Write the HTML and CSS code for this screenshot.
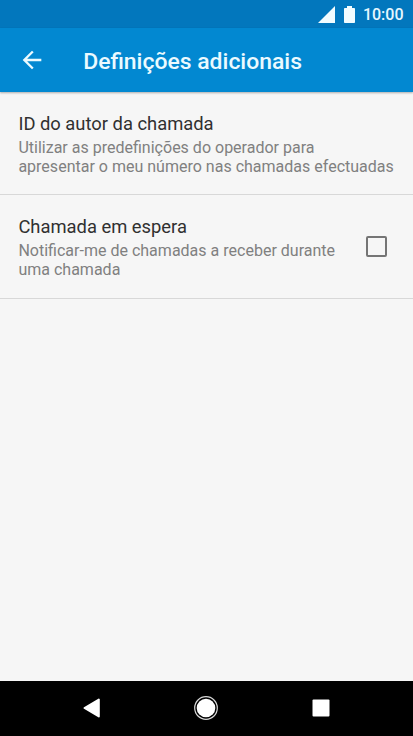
FILE: index.html
```html
<!DOCTYPE html>
<html lang="pt">
  <head>
    <meta charset="UTF-8" />
    <meta name="viewport" content="width=device-width, initial-scale=1.0" />
    <title>Definições adicionais</title>
    <link rel="stylesheet" href="styles.css">
  </head>
  <body>
    <div class="screen">
      <div class="status-bar">
        <svg class="signal-icon" width="17" height="17" viewBox="0 0 17 17">
          <path d="M0 17L17 0V17Z" />
        </svg>
        <svg class="battery-icon" width="11" height="17" viewBox="0 0 11 17">
          <path d="M3 0H8V2H10.2Q11 2 11 2.8V16.2Q11 17 10.2 17H0.8Q0 17 0 16.2V2.8Q0 2 0.8 2H3Z" />
        </svg>
        <span class="clock">10:00</span>
      </div>

      <header class="app-bar">
        <a href="#" class="back-button" aria-label="Voltar">
          <svg width="28" height="28" viewBox="0 0 24 24">
            <path d="M20 11H7.83l5.59-5.59L12 4l-8 8 8 8 1.41-1.41L7.83 13H20v-2z" />
          </svg>
        </a>
        <h1>Definições adicionais</h1>
      </header>

      <main class="settings">
        <div class="setting">
          <div class="setting-text">
            <div class="setting-title">ID do autor da chamada</div>
            <div class="setting-summary">
              Utilizar as predefinições do operador para<br />
              apresentar o meu número nas chamadas efectuadas
            </div>
          </div>
        </div>
        <div class="setting">
          <div class="setting-text">
            <div class="setting-title">Chamada em espera</div>
            <div class="setting-summary">
              Notificar-me de chamadas a receber durante<br />
              uma chamada
            </div>
          </div>
          <div class="checkbox" role="checkbox" aria-checked="false"></div>
        </div>
      </main>

      <nav class="nav-bar">
        <svg width="24" height="24" viewBox="0 0 24 24">
          <path d="M4.5 12L18.8 3.6V20.4Z" stroke-width="2" stroke-linejoin="round" />
        </svg>
        <svg width="24" height="24" viewBox="0 0 24 24">
          <circle cx="12" cy="12" r="9.3" />
          <circle class="ring" cx="12" cy="12" r="11.3" />
        </svg>
        <svg width="24" height="24" viewBox="0 0 24 24">
          <rect x="3.5" y="3.5" width="17" height="17" rx="1" />
        </svg>
      </nav>
    </div>
  </body>
</html>
```
FILE: styles.css
```css
* {
  margin: 0;
  padding: 0;
  box-sizing: border-box;
}

body {
  font-family: Roboto, sans-serif;
  background: #f6f6f6;
}

.screen {
  display: flex;
  flex-direction: column;
  height: 100vh;
  overflow: hidden;
}

.status-bar {
  display: flex;
  align-items: center;
  justify-content: flex-end;
  height: 28px;
  padding-right: 9.5px;
  background: #0277bd;
  color: #e6f7ff;
}

.status-bar svg {
  fill: #f2fcff;
}

.battery-icon {
  margin-left: 9px;
}

.clock {
  margin-left: 7.5px;
  padding-top: 2px;
  font-size: 16px;
  font-weight: 500;
  line-height: 28px;
}

.app-bar {
  display: flex;
  align-items: center;
  height: 64px;
  padding-left: 18px;
  background: #0288d1;
  color: #ebfaff;
  box-shadow: 0 1px 2px rgba(0, 0, 0, 0.3);
}

.back-button {
  display: flex;
  width: 65.2px;
}

.back-button svg {
  fill: #ebfaff;
}

h1 {
  padding-top: 3px;
  font-size: 22.95px;
  font-weight: 500;
  line-height: 28px;
}

.settings {
  flex: 1;
}

.setting {
  display: flex;
  align-items: center;
  height: 103.5px;
  padding: 0 26px 0 18.4px;
  border-bottom: 1px solid #d8d8d8;
}

.setting:first-child {
  height: 103px;
}

.setting-text {
  flex: 1;
  padding-top: 2px;
  white-space: nowrap;
}

.setting-title {
  margin-bottom: 3px;
  color: #303030;
  font-size: 18.36px;
  line-height: 23px;
}

.setting-summary {
  color: #808080;
  font-size: 16.03px;
  line-height: 19px;
}

.checkbox {
  width: 21px;
  height: 21px;
  border: 2px solid #757575;
  border-radius: 2px;
}

.nav-bar {
  display: flex;
  align-items: center;
  justify-content: center;
  gap: 90.5px;
  height: 55px;
  padding: 0 1px 1px 0;
  background: #000;
}

.nav-bar svg {
  fill: #fff;
  stroke: #fff;
  stroke-width: 0;
}

.nav-bar .ring {
  fill: none;
  stroke: #d8d8d8;
  stroke-width: 1.2;
}
```
